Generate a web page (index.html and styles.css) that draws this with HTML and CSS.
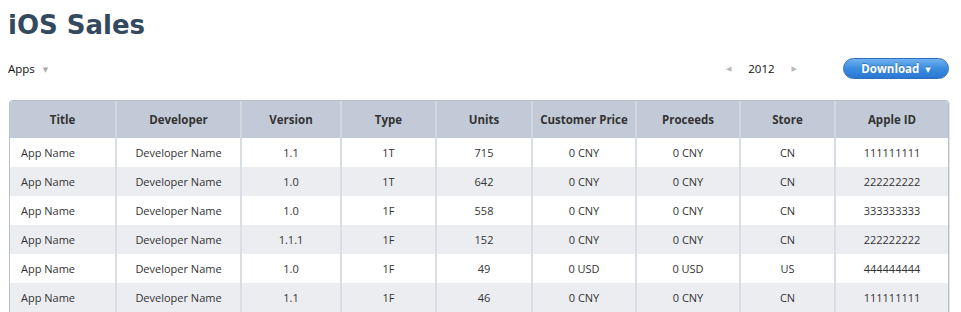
FILE: index.html
```html
<!DOCTYPE html>
<html>
<head>
<meta charset="utf-8">
<link rel="stylesheet" href="styles.css">
</head>
<body>
<div class="page">
  <h1 class="title">iOS Sales</h1>
  <div class="toolbar">
    <div class="filter">Apps <span class="caret">&#9660;</span></div>
    <div class="right">
      <div class="year"><span class="arrow">&#9664;</span><span class="yr">2012</span><span class="arrow">&#9654;</span></div>
      <button class="download">Download <span class="dcaret">&#9660;</span></button>
    </div>
  </div>
  <div class="tablewrap">
    <table class="sales">
      <colgroup>
        <col class="c-title"><col class="c-dev"><col class="c-ver"><col class="c-type"><col class="c-units"><col class="c-price"><col class="c-proc"><col class="c-store"><col class="c-id">
      </colgroup>
      <thead>
        <tr><th>Title</th><th>Developer</th><th>Version</th><th>Type</th><th>Units</th><th>Customer Price</th><th>Proceeds</th><th>Store</th><th>Apple ID</th></tr>
      </thead>
      <tbody>
        <tr><td class="left">App Name</td><td>Developer Name</td><td>1.1</td><td>1T</td><td>715</td><td>0 CNY</td><td>0 CNY</td><td>CN</td><td>111111111</td></tr>
        <tr><td class="left">App Name</td><td>Developer Name</td><td>1.0</td><td>1T</td><td>642</td><td>0 CNY</td><td>0 CNY</td><td>CN</td><td>222222222</td></tr>
        <tr><td class="left">App Name</td><td>Developer Name</td><td>1.0</td><td>1F</td><td>558</td><td>0 CNY</td><td>0 CNY</td><td>CN</td><td>333333333</td></tr>
        <tr><td class="left">App Name</td><td>Developer Name</td><td>1.1.1</td><td>1F</td><td>152</td><td>0 CNY</td><td>0 CNY</td><td>CN</td><td>222222222</td></tr>
        <tr><td class="left">App Name</td><td>Developer Name</td><td>1.0</td><td>1F</td><td>49</td><td>0 USD</td><td>0 USD</td><td>US</td><td>444444444</td></tr>
        <tr><td class="left">App Name</td><td>Developer Name</td><td>1.1</td><td>1F</td><td>46</td><td>0 CNY</td><td>0 CNY</td><td>CN</td><td>111111111</td></tr>
      </tbody>
    </table>
  </div>
</div>
</body>
</html>
```

FILE: styles.css
```css
html, body {
  margin: 0;
  padding: 0;
  background: #ffffff;
}
body {
  font-family: "Open Sans", "DejaVu Sans", sans-serif;
  font-size: 11px;
  color: #333333;
}
.page {
  padding: 0 12px 0 9px;
  overflow: hidden;
  height: 312px;
}
.title {
  margin: 10px 0 0 -1px;
  font-family: "DejaVu Sans", sans-serif;
  font-size: 26px;
  line-height: 31px;
  font-weight: bold;
  color: #34495e;
}
.toolbar {
  display: flex;
  justify-content: space-between;
  align-items: center;
  margin-top: 17px;
  height: 21px;
}
.filter {
  font-size: 11.5px;
  color: #111;
  margin-left: -1px;
}
.caret {
  font-size: 7px;
  color: #aaaaaa;
  margin-left: 5px;
  vertical-align: 1px;
}
.right {
  display: flex;
  align-items: center;
}
.year {
  display: flex;
  align-items: center;
  margin-right: 46px;
}
.arrow {
  font-size: 7px;
  color: #b8b8b8;
}
.yr {
  color: #111;
  margin: 0 17px 0 17px;
  font-size: 11.5px;
}
.download {
  width: 106px;
  height: 21px;
  border: 1px solid #2e6fbd;
  border-radius: 11px;
  background: linear-gradient(#6fb2f0, #3b8ce0 50%, #2a77d2);
  color: #ffffff;
  font-family: "Open Sans", "DejaVu Sans", sans-serif;
  font-weight: bold;
  font-size: 11.5px;
  line-height: 19px;
  text-shadow: 0 -1px 0 rgba(0, 0, 0, 0.25);
  padding: 0;
}
.dcaret {
  font-size: 7px;
  vertical-align: 1px;
  margin-left: 3px;
}
.tablewrap {
  margin-top: 21px;
  border: 1px solid #b9c0cb;
  border-bottom: none;
  border-radius: 4px 4px 0 0;
  overflow: hidden;
  box-shadow: 1px 0 0 #e0e3e8;
  width: 938px;
}
.sales {
  border-collapse: collapse;
  table-layout: fixed;
  width: 938px;
}
.c-title { width: 106px; }
.c-dev { width: 125px; }
.c-ver { width: 100px; }
.c-type { width: 95px; }
.c-units { width: 96px; }
.c-price { width: 104px; }
.c-proc { width: 104px; }
.c-store { width: 95px; }
.c-id { width: 113px; }
.sales th {
  background: #c3cad7;
  height: 37px;
  padding: 0;
  font-size: 11.5px;
  font-weight: bold;
  color: #333;
  text-align: center;
  border-right: 2px solid #d3d8e0;
}
.sales td {
  height: 29px;
  padding: 0;
  text-align: center;
  border-right: 2px solid #d9dde4;
  white-space: nowrap;
}
.sales th:last-child,
.sales td:last-child {
  border-right: none;
}
.sales td.left {
  text-align: left;
  padding-left: 11px;
}
.sales tbody tr:nth-child(even) td {
  background: #ecedf1;
}
```
